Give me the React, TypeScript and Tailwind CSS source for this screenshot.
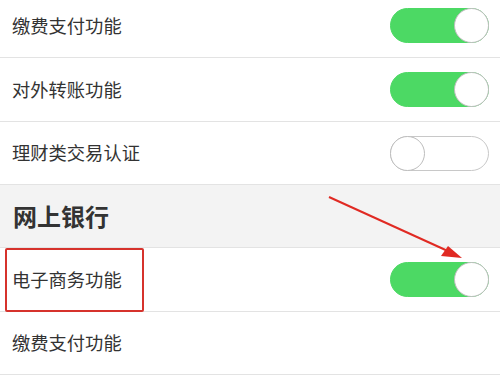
import React from "react";

const font = { fontFamily: '"Noto Sans CJK SC", "Noto Sans", sans-serif' };

function Toggle({ on }: { on: boolean }) {
  return (
    <div
      className={
        "relative h-[35px] w-[99px] rounded-full border " +
        (on ? "border-[#4cd964] bg-[#4cd964]" : "border-[#c8c8c8] bg-white")
      }
    >
      <div
        className={
          "absolute top-[-1px] h-[35px] w-[35px] rounded-full border border-[#bdbdbd] bg-white " +
          (on ? "right-[-1px]" : "left-[-1px]")
        }
      />
    </div>
  );
}

function Row({
  label,
  on,
  boxed,
  tall,
}: {
  label: string;
  on?: boolean;
  boxed?: boolean;
  tall?: boolean;
}) {
  return (
    <div
      className={
        "relative flex items-center justify-between border-b border-[#e3e3e3] bg-white pl-3 pr-[11px] " +
        (tall ? "h-[64px]" : "h-[63px]")
      }
    >
      <span className="text-[18.3px] text-[#333]">{label}</span>
      {on !== undefined && <Toggle on={on} />}
      {boxed && (
        <div className="absolute left-[5px] top-0 h-[64px] w-[139px] rounded-[2px] border-2 border-[#d6322c]" />
      )}
    </div>
  );
}

export default function App() {
  return (
    <div className="relative h-[375px] w-[500px] overflow-hidden bg-white" style={font}>
      <div className="-mt-[6px]">
        <Row label="缴费支付功能" on={true} tall />
        <Row label="对外转账功能" on={true} tall />
        <Row label="理财类交易认证" on={false} />
        <div className="flex h-[63px] items-center border-b border-[#e3e3e3] bg-[#f3f3f3] pl-[13px]">
          <span className="text-[24px] font-bold text-[#333]">网上银行</span>
        </div>
        <Row label="电子商务功能" on={true} boxed tall />
        <Row label="缴费支付功能" />
      </div>
      <svg className="absolute left-0 top-0" width="500" height="375">
        <line x1="329" y1="197" x2="450" y2="252" stroke="#e02a23" strokeWidth="2" />
        <polygon points="462,258 441,256 448,246" fill="#e02a23" />
      </svg>
    </div>
  );
}
